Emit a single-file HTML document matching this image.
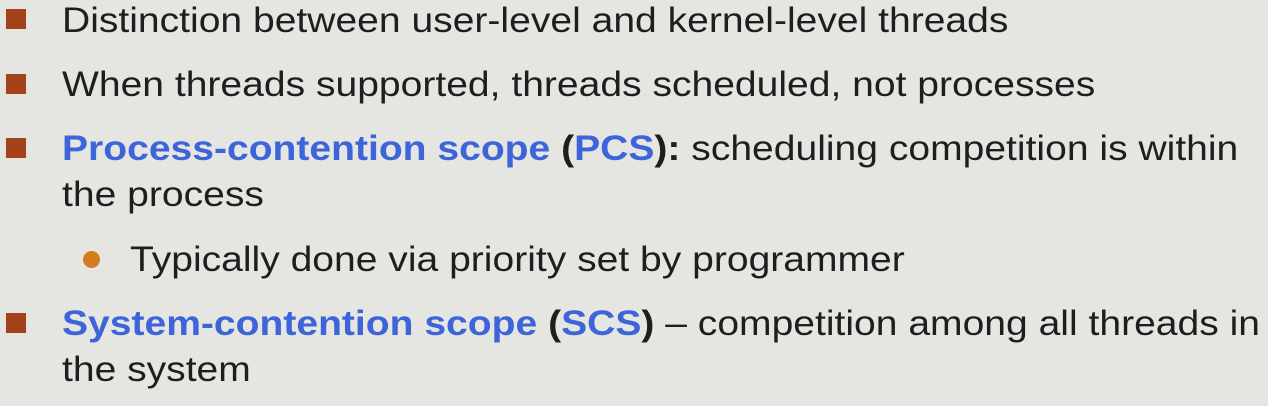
<!DOCTYPE html>
<html><head><style>
body{margin:0;width:1268px;height:406px;background:#e5e5e2;overflow:hidden;font-family:"Liberation Sans",sans-serif;color:#1e1e1e;}
.l{position:absolute;left:62px;font-size:35.5px;line-height:40px;white-space:nowrap;transform:scaleX(1.1);transform-origin:0 0;}
.sq{position:absolute;left:6px;width:20px;height:20px;background:#a2411a;}
.b{color:#3d64d8;font-weight:bold;}
.k{font-weight:bold;}
.dot{position:absolute;left:83px;width:17px;height:17px;border-radius:50%;background:#d27c1e;}
</style></head><body>
<div class="sq" style="top:9px"></div>
<div class="l" style="top:0px">Distinction between user-level and kernel-level threads</div>
<div class="sq" style="top:74px"></div>
<div class="l" style="top:64px">When threads supported, threads scheduled, not processes</div>
<div class="sq" style="top:138px"></div>
<div class="l" style="top:128px"><span class="b">Process-contention scope</span> <span class="k">(</span><span class="b">PCS</span><span class="k">):</span> scheduling competition is within</div>
<div class="l" style="top:174px">the process</div>
<div class="dot" style="top:251px"></div>
<div class="l" style="left:130px;top:239px">Typically done via priority set by programmer</div>
<div class="sq" style="top:313px"></div>
<div class="l" style="top:303px"><span class="b">System-contention scope</span> <span class="k">(</span><span class="b">SCS</span><span class="k">)</span> – competition among all threads in</div>
<div class="l" style="top:349px">the system</div>
</body></html>
